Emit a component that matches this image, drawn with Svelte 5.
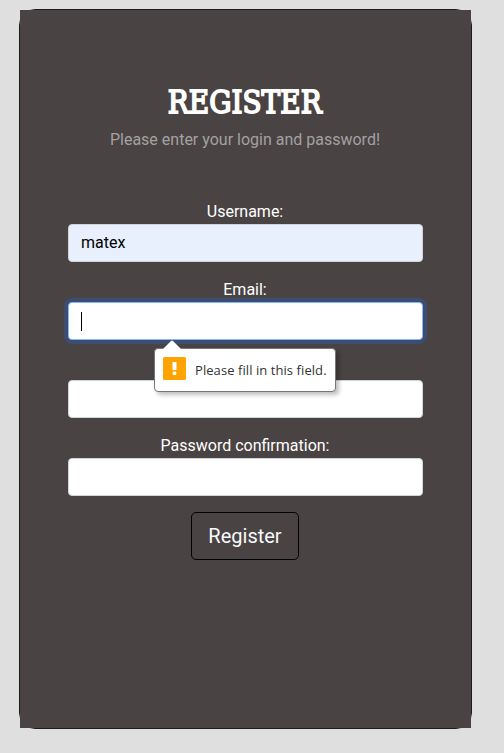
<script>
  const fields = [
    { id: 'username', label: 'Username:', value: 'matex', filled: true },
    { id: 'email', label: 'Email:', focused: true },
    { id: 'password', label: '' },
    { id: 'confirmation', label: 'Password confirmation:' }
  ];
</script>

<main>
  <section class="card">
    <div class="body">
      <h2><span>REGISTER</span></h2>
      <p>Please enter your login and password!</p>
      <form novalidate>
        {#each fields as field (field.id)}
          <div class="field">
            <label for={field.id}>{field.label}</label>
            <div id={field.id} class="control" class:filled={field.filled} class:focused={field.focused}>
              {#if field.focused}<span class="caret"></span>{:else}{field.value ?? ''}{/if}
            </div>
            {#if field.focused}
              <div class="tooltip" role="alert">
                <svg class="arrow" width="18" height="9" viewBox="0 0 18 9">
                  <path d="M0 9L8 1Q9 0 10 1L18 9Z" fill="#fff" />
                </svg>
                <svg width="23" height="23" viewBox="0 0 23 23">
                  <rect width="23" height="23" rx="1.5" fill="#ffa300" />
                  <path d="M9.5 5H13.5V13H9.5Z" fill="#fff" />
                  <rect x="9.7" y="14.4" width="3.6" height="3.6" rx="1" fill="#fff" />
                </svg>
                <span class="message">Please fill in this field.</span>
              </div>
            {/if}
          </div>
        {/each}
        <button type="button">Register</button>
      </form>
    </div>
  </section>
</main>

<style>
  :global(body) {
    background: #dfdfdf;
  }
  main {
    box-sizing: border-box;
    height: 753px;
    padding: 9px 32px 24px 19px;
    font: 16px/24px Roboto, sans-serif;
    color: #fff;
  }
  .card {
    box-sizing: border-box;
    height: 720px;
    border: 1px solid #1f1b1c;
    border-radius: 16px;
  }
  .body {
    box-sizing: border-box;
    height: 718px;
    padding: 73px 48px 0;
    background: #494343;
    text-align: center;
  }
  h2 {
    margin: 0 0 7px;
    font: 400 32px/38px 'DejaVu Serif', serif;
  }
  h2 span {
    display: inline-block;
    transform: translateX(-0.5px) scaleX(0.873);
    margin: 0 -40px;
    -webkit-text-stroke: 1.8px #fff;
  }
  p {
    margin: 0 0 48px;
    padding-right: 1px;
    color: #a4a1a1;
  }
  .field {
    position: relative;
    margin-bottom: 16px;
  }
  label {
    display: block;
    height: 24px;
    padding-right: 1px;
  }
  .control {
    box-sizing: border-box;
    height: 38px;
    padding: 6px 12px;
    border: 1px solid #ced4da;
    border-radius: 4px;
    background: #fff;
    color: #000;
    text-align: left;
  }
  .filled {
    background: #e8f0fe;
  }
  .focused {
    border-color: #86b7fe;
    box-shadow: 0 0 0 4px #3b4d71;
  }
  .caret {
    display: block;
    width: 1px;
    height: 19px;
    margin-top: 3px;
    background: #000;
  }
  .tooltip {
    box-sizing: border-box;
    position: absolute;
    z-index: 1;
    top: 70px;
    left: 86px;
    width: 182px;
    height: 44px;
    padding: 0 8px;
    display: flex;
    align-items: center;
    gap: 9px;
    border: 1px solid #777;
    border-radius: 4px;
    background: #fff;
    box-shadow: 3px 3px 4px rgba(0, 0, 0, 0.25);
    color: #333;
    font: 13px/20px 'Open Sans', sans-serif;
    letter-spacing: 0.07px;
    white-space: nowrap;
  }
  .tooltip > svg:not(.arrow) {
    flex: none;
    margin-top: -3px;
  }
  .arrow {
    position: absolute;
    top: -9px;
    left: 8px;
  }
  button {
    display: block;
    box-sizing: border-box;
    width: 108px;
    height: 48px;
    margin: 0 0 0 123px;
    padding: 0;
    border: 1px solid #000;
    border-radius: 5px;
    background: transparent;
    color: #f8f9fa;
    font: 20px/30px Roboto, sans-serif;
  }
</style>
